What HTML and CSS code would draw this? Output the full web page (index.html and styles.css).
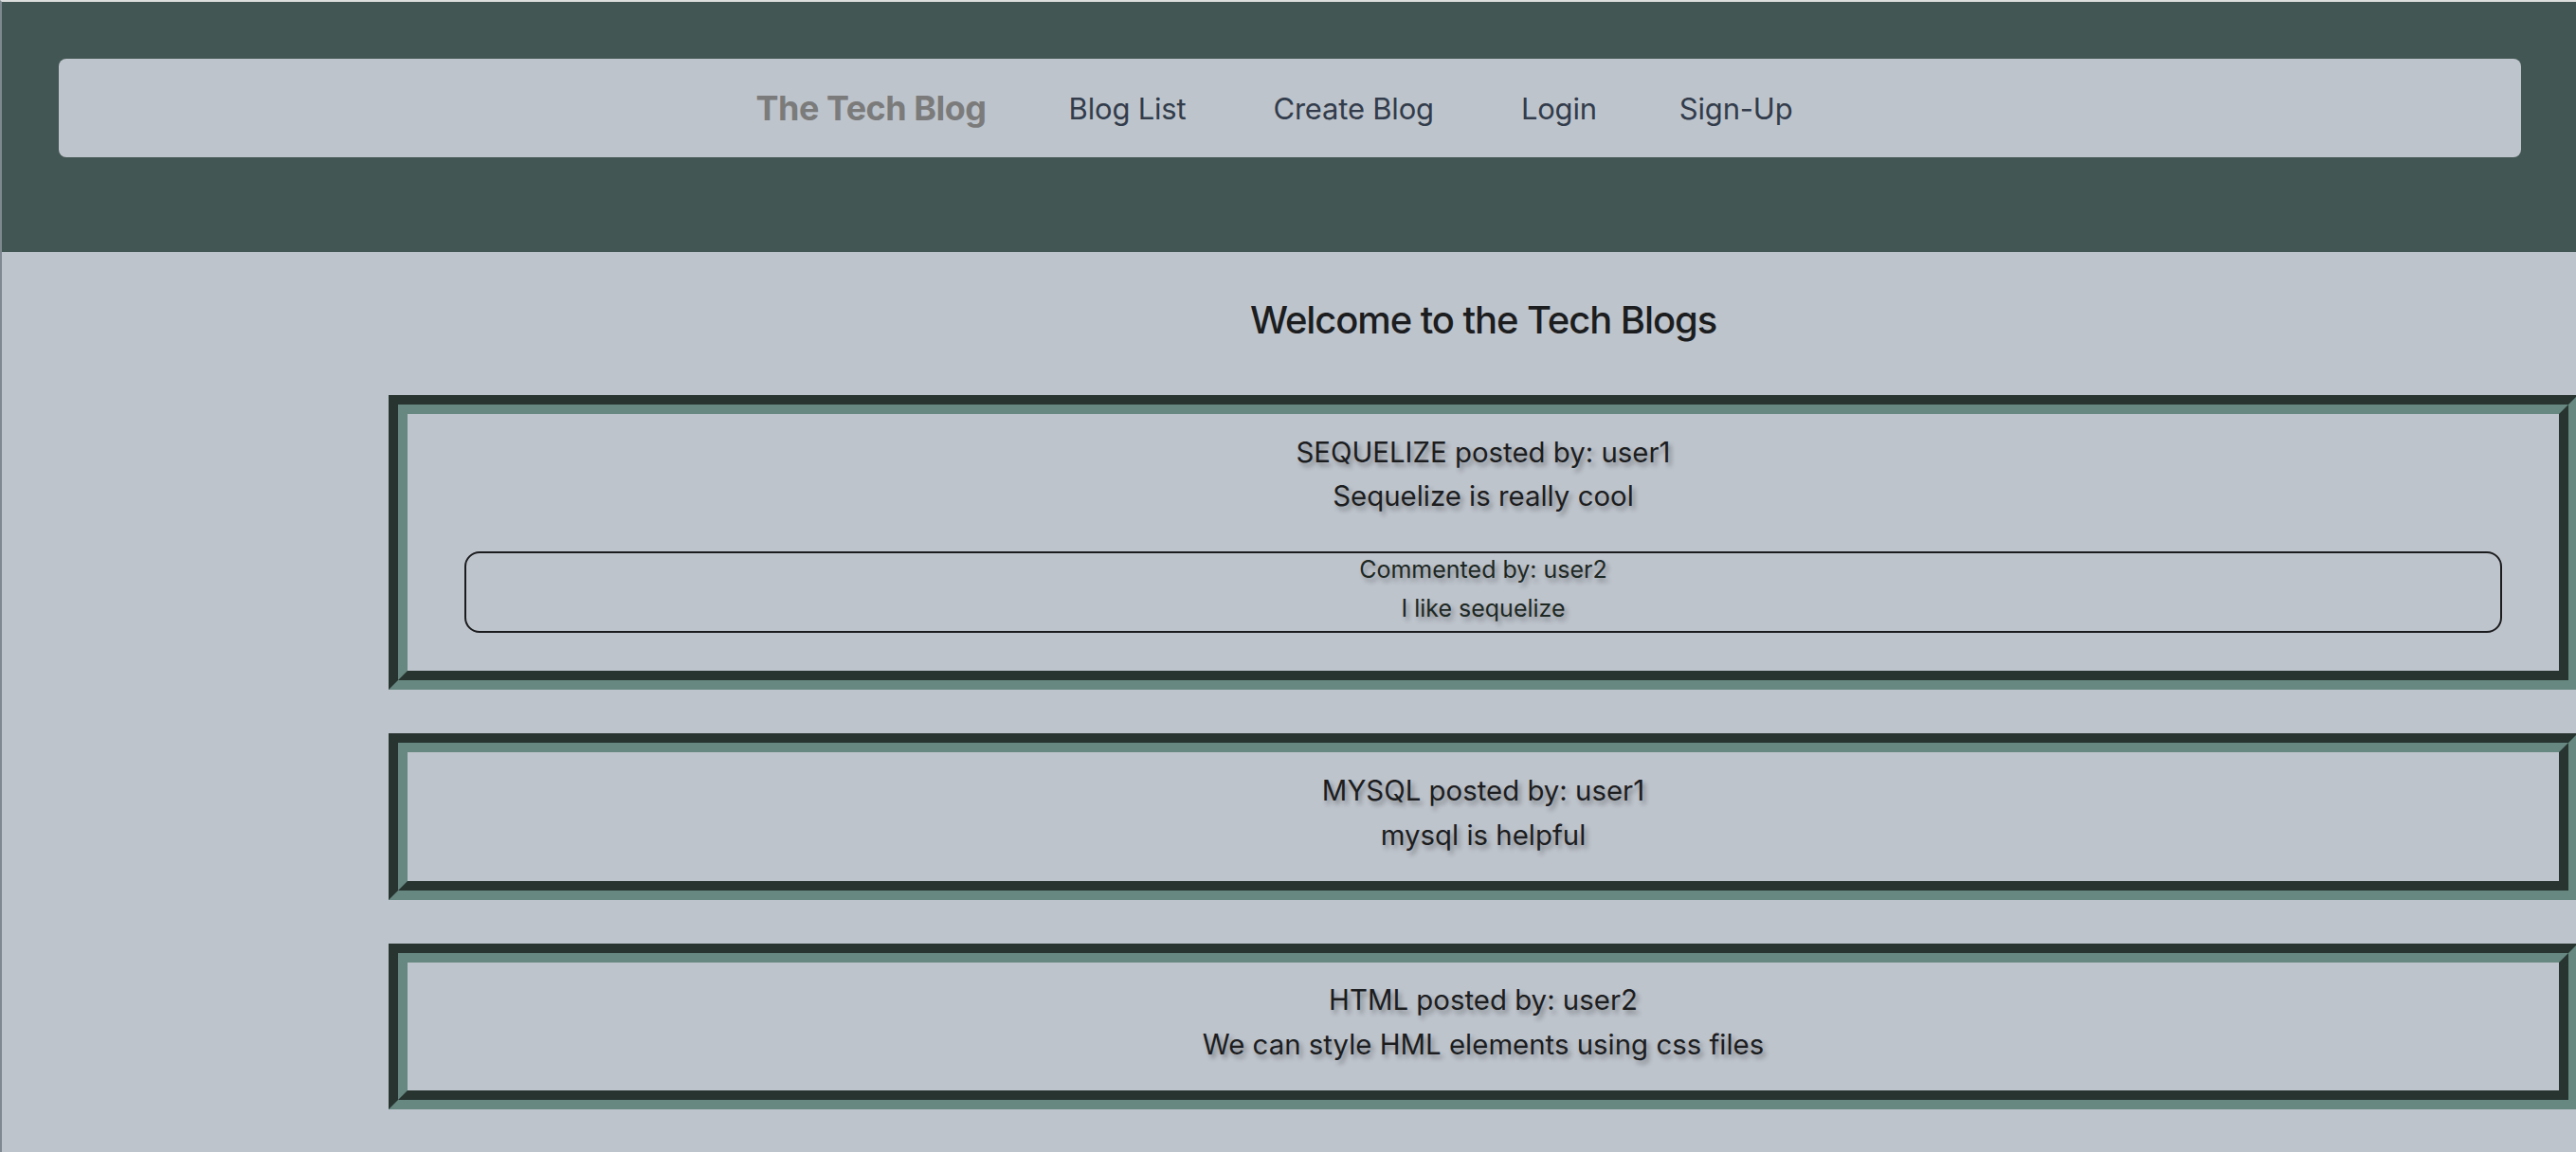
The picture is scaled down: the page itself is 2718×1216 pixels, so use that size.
FILE: index.html
```html
<!DOCTYPE html>
<html lang="en">
<head>
<meta charset="utf-8">
<title>The Tech Blog</title>
<link rel="stylesheet" href="styles.css">
</head>
<body>
<div class="frame">
  <header class="site-header">
    <nav class="navbar">
      <a class="brand" href="#">The Tech Blog</a>
      <a class="nav-link" href="#">Blog List</a>
      <a class="nav-link nav-link-wide" href="#">Create Blog</a>
      <a class="nav-link nav-link-wide" href="#">Login</a>
      <a class="nav-link" href="#">Sign-Up</a>
    </nav>
  </header>
  <main class="main">
    <div class="side"></div>
    <section class="content">
      <h1 class="title">Welcome to the Tech Blogs</h1>
      <article class="card">
        <p class="post-line">SEQUELIZE posted by: user1</p>
        <p class="post-line">Sequelize is really cool</p>
        <div class="comment">
          <p class="comment-line">Commented by: user2</p>
          <p class="comment-line">I like sequelize</p>
        </div>
      </article>
      <article class="card">
        <p class="post-line">MYSQL posted by: user1</p>
        <p class="post-line">mysql is helpful</p>
      </article>
      <article class="card">
        <p class="post-line">HTML posted by: user2</p>
        <p class="post-line">We can style HML elements using css files</p>
      </article>
    </section>
  </main>
</div>
</body>
</html>
```
FILE: styles.css
```css
html, body {
  margin: 0;
  padding: 0;
  overflow: hidden;
  background: #bec4cc;
}
body {
  font-family: Inter, "Noto Sans", sans-serif;
  color: #1c1d1f;
}
.frame {
  border-top: 2px solid #dcdddd;
  border-left: 2px solid #7f8890;
  min-height: 1214px;
  box-sizing: border-box;
}
.site-header {
  background: #425753;
  padding: 60px 58px 100px 60px;
}
.navbar {
  background: #bec4cc;
  border-radius: 8px;
  height: 104px;
  display: flex;
  align-items: center;
  justify-content: center;
  gap: 87px;
  padding-right: 33px;
}
.navbar a {
  text-decoration: none;
  white-space: nowrap;
}
.brand {
  font-size: 36px;
  font-weight: 700;
  color: #7b7b7b;
  letter-spacing: -0.5px;
}
.nav-link {
  font-size: 31px;
  font-weight: 420;
  color: #323c4b;
  letter-spacing: -0.2px;
}
.nav-link-wide {
  margin-left: 5px;
}
.main {
  display: flex;
}
.side {
  flex: 0 0 408px;
}
.content {
  flex: 0 0 2310px;
  display: flex;
  flex-direction: column;
  align-items: stretch;
}
.title {
  margin: 48px 0 55px;
  font-size: 40px;
  line-height: 48px;
  font-weight: 500;
  text-align: center;
  color: #1c1d1f;
  letter-spacing: -1.1px;
}
.card {
  border: 20px groove #678880;
  padding: 17.5px 0 24.5px;
  margin-bottom: 46px;
  text-align: center;
}
.post-line {
  margin: 0;
  font-size: 29.4px;
  font-weight: 440;
  line-height: 46.7px;
  text-shadow: 3px 4px 5px rgba(0, 0, 0, 0.32);
}
.comment {
  margin: 34.5px 60px 15.5px;
  border: 2px solid #1b1c1e;
  border-radius: 16px;
  padding: 1.5px 0 0;
}
.comment-line {
  margin: 0 0 10px;
  font-size: 25px;
  font-weight: 430;
  line-height: 31px;
  color: #1d2824;
  text-shadow: 3px 4px 5px rgba(0, 0, 0, 0.3);
}
.comment-line:last-child {
  margin-bottom: 8.5px;
}
```
